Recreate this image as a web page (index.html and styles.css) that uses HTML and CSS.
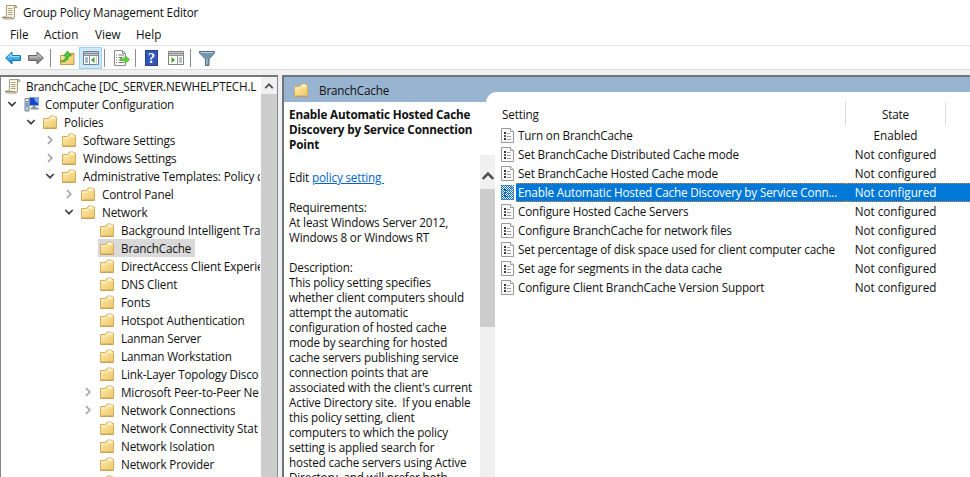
FILE: index.html
```html
<!DOCTYPE html>
<html lang="en">
<head>
<meta charset="utf-8">
<title>Group Policy Management Editor</title>
<link rel="stylesheet" href="styles.css">
</head>
<body>
<svg class="defs" width="0" height="0">
  <defs>
    <linearGradient id="gold" x1="0" y1="0" x2="1" y2="1"><stop offset="0" stop-color="#fdebb0"/><stop offset="1" stop-color="#edc767"/></linearGradient>
    <linearGradient id="blue" x1="0" y1="0" x2="0" y2="1"><stop offset="0" stop-color="#7cd0f6"/><stop offset="1" stop-color="#1287d0"/></linearGradient>
    <linearGradient id="gray" x1="0" y1="0" x2="0" y2="1"><stop offset="0" stop-color="#b5b5b5"/><stop offset="1" stop-color="#777"/></linearGradient>
    <pattern id="dither" width="2" height="2" patternUnits="userSpaceOnUse"><rect width="1" height="1" fill="#0078d7"/><rect x="1" y="1" width="1" height="1" fill="#0078d7"/></pattern>
  </defs>
  <symbol id="folder" viewBox="0 0 14 14">
    <path d="M.5 3.500H5l1.500-1 .8-1.500h4.200l1 1.200h1v11H.5z" fill="url(#gold)" stroke="#d5ad5c"/>
    <path d="M8 2.200h3.500" stroke="#fffbe8" stroke-width="1.400"/>
    <path d="M1 5.200h5l1.800-1.600H13" fill="none" stroke="#fff3c8"/>
    <path d="M.5 13.300h13" stroke="#bf9850"/>
  </symbol>
  <symbol id="scroll" viewBox="0 0 16 16">
    <path d="M4.500 1.500h9q1.500.2 1.500 2h-2.500v9.500q0 2-2 2h-8q-2 0-2-2h3q.8 0 .8-1z" fill="#f7f3dc" stroke="#a49c80"/>
    <path d="M12.500 3.500q0-2 1.300-2" fill="none" stroke="#8f8768"/>
    <path d="M6 4.500h4.500M6 6.500h4.500M6 8.500h4.500M6 10.500h4.500" stroke="#a9a48f"/>
    <path d="M1 13.500h8.500q.3 1.200 1.500 1.200" fill="none" stroke="#8f8768"/>
  </symbol>
  <symbol id="computer" viewBox="0 0 16 16">
    <path d="M5.500 1.500h9v8h-9z" fill="#1a45d0" stroke="#8fa3b8"/>
    <path d="M10 2h4v5q-3-1-4-5z" fill="#69a9f5"/>
    <path d="M8.500 10h3v2h-3z" fill="#8894a0"/><path d="M6.500 12.500h8" stroke="#8492a0" stroke-width="2"/>
    <path d="M1 5.500h4V15H1z" fill="#b9cbd9" stroke="#6f8799"/><path d="M2 8h2M2 10h2" stroke="#4f6d82"/>
    <path d="M1 4.500q0-2 2-2t2 2" fill="none" stroke="#5d7484" stroke-width="1.200"/>
  </symbol>
  <symbol id="down" viewBox="0 0 10 10"><path d="M1.300 3l3.700 3.700L8.700 3" fill="none" stroke="#404040" stroke-width="1.700"/></symbol>
  <symbol id="right" viewBox="0 0 10 10"><path d="M3 1.200l3.800 3.800L3 8.800" fill="none" stroke="#a6a6a6" stroke-width="1.700"/></symbol>
  <symbol id="up" viewBox="0 0 12 12"><path d="M1.500 8.500L6 4l4.500 4.500" fill="none" stroke="#505050" stroke-width="2.200"/></symbol>
  <symbol id="setting" viewBox="0 0 13 15">
    <path d="M.5.5h9l3 3v11H.5z" fill="#fcfcfc" stroke="#999"/><path d="M9.500.5v3h3" fill="#fff" stroke="#999"/>
    <path d="M3 4h2v2H3zM3 10h2v2H3z" fill="#333"/><path d="M3 7h2v2H3z" fill="#555"/>
    <path d="M6 5.500h3M6 8.500h4M6 11.500h4" stroke="#999"/>
  </symbol>
</svg>

<div class="window">
  <header class="titlebar"><svg class="i16"><use href="#scroll"/></svg><span>Group Policy Management Editor</span></header>
  <nav class="menu"><span class="m1">File</span><span class="m2">Action</span><span class="m3">View</span><span class="m4">Help</span></nav>
  <div class="toolbar">
    <svg class="tool" viewBox="0 0 18 18"><path d="M1.500 9L8 3v3.500h8.500v5H8V15z" fill="url(#blue)" stroke="#1579b7"/><path d="M4 8.500L7.300 5.600v2H15" fill="none" stroke="#a6e2fb"/></svg>
    <svg class="tool" viewBox="0 0 18 18"><path d="M16.500 9L10 3v3.500H1.500v5H10V15z" fill="url(#gray)" stroke="#656565"/><path d="M3 8h8V5.600L14 8.500" fill="none" stroke="#c9c9c9"/></svg>
    <i class="sep"></i>
    <svg class="tool folder-up" viewBox="0 0 18 18"><path d="M2.500 6.500h6l2-2h5.500v11H2.500z" fill="url(#gold)" stroke="#c99b48"/><path d="M12 5h4" stroke="#b8873c"/><path d="M3 12q4 0 5-5H5.500L9.500 2l4 5H11Q10 13 3 13z" fill="#52c536" stroke="#309924" stroke-width=".7"/></svg>
    <span class="tool-on"><svg class="tool" viewBox="0 0 18 18"><path d="M1.500 2.500h15v13h-15z" fill="#fff" stroke="#73808a"/><path d="M2 4.500h14" stroke="#82909b" stroke-width="2"/><path d="M1 6.500h16M7.500 7v9" stroke="#87929a"/><path d="M3 9h3M3 11h3M3 13h3" stroke="#4376ad"/><path d="M9 11l3.500-3v6z" fill="#36a51f"/><path d="M14.500 7v8.500" stroke="#cbd2d8"/></svg></span>
    <i class="sep"></i>
    <svg class="tool export" viewBox="0 0 18 18"><path d="M2.500 1.500h8l3 3v12h-11z" fill="#fff" stroke="#8d8d8d"/><path d="M10.500 1.500v3h3" fill="none" stroke="#8d8d8d"/><path d="M4 6h1m1.500 0H12M4 8.500h1m1.500 0H10M4 11h1m1.500 0H9M4 13.500h1m1.500 0H12" stroke="#7b7b7b"/><path d="M8.500 9.300H13V6.500l4.500 4-4.500 4v-2.800H8.500z" fill="#62cf40" stroke="#45a82c" stroke-width=".7"/></svg>
    <i class="sep"></i>
    <span class="tool help">?</span>
    <svg class="tool panes" viewBox="0 0 18 18"><path d="M1.500 2.500h15v13h-15z" fill="#fff" stroke="#828282"/><path d="M2 4.500h14" stroke="#909090" stroke-width="2"/><path d="M1 6.500h16M10.500 7v9" stroke="#909090"/><path d="M12 9h3M12 11h3M12 13h3" stroke="#6f8297"/><path d="M8 11L4.500 8v6z" fill="#36a51f"/></svg>
    <i class="sep"></i>
    <svg class="tool filter" viewBox="0 0 18 18"><path d="M1.500 2.500h15v1.500L11 10v6.500H7.500V10l-6-6z" fill="#7797ae" stroke="#4f6c82"/><path d="M2.500 3.500h13" stroke="#b7cddd"/><path d="M8.800 10v5.500" stroke="#bdd3e1"/></svg>
  </div>

  <main class="body">
    <section class="tree">
      <div class="nodes">
        <div class="node root"><svg class="i16"><use href="#scroll"/></svg><span>BranchCache [DC_SERVER.NEWHELPTECH.L</span></div>
        <div class="node l1"><svg class="ch"><use href="#down"/></svg><svg class="i16"><use href="#computer"/></svg><span>Computer Configuration</span></div>
        <div class="node l2"><svg class="ch"><use href="#down"/></svg><svg class="fo"><use href="#folder"/></svg><span>Policies</span></div>
        <div class="node l3"><svg class="ch"><use href="#right"/></svg><svg class="fo"><use href="#folder"/></svg><span>Software Settings</span></div>
        <div class="node l3"><svg class="ch"><use href="#right"/></svg><svg class="fo"><use href="#folder"/></svg><span>Windows Settings</span></div>
        <div class="node l3"><svg class="ch"><use href="#down"/></svg><svg class="fo"><use href="#folder"/></svg><span>Administrative Templates: Policy d</span></div>
        <div class="node l4"><svg class="ch"><use href="#right"/></svg><svg class="fo"><use href="#folder"/></svg><span>Control Panel</span></div>
        <div class="node l4"><svg class="ch"><use href="#down"/></svg><svg class="fo"><use href="#folder"/></svg><span>Network</span></div>
        <div class="node l5"><svg class="fo"><use href="#folder"/></svg><span>Background Intelligent Tra</span></div>
        <div class="node l5 current"><svg class="fo"><use href="#folder"/></svg><span>BranchCache</span></div>
        <div class="node l5"><svg class="fo"><use href="#folder"/></svg><span>DirectAccess Client Experie</span></div>
        <div class="node l5"><svg class="fo"><use href="#folder"/></svg><span>DNS Client</span></div>
        <div class="node l5"><svg class="fo"><use href="#folder"/></svg><span>Fonts</span></div>
        <div class="node l5"><svg class="fo"><use href="#folder"/></svg><span>Hotspot Authentication</span></div>
        <div class="node l5"><svg class="fo"><use href="#folder"/></svg><span>Lanman Server</span></div>
        <div class="node l5"><svg class="fo"><use href="#folder"/></svg><span>Lanman Workstation</span></div>
        <div class="node l5"><svg class="fo"><use href="#folder"/></svg><span>Link-Layer Topology Disco</span></div>
        <div class="node l5 parent"><svg class="ch"><use href="#right"/></svg><svg class="fo"><use href="#folder"/></svg><span>Microsoft Peer-to-Peer Ne</span></div>
        <div class="node l5 parent"><svg class="ch"><use href="#right"/></svg><svg class="fo"><use href="#folder"/></svg><span>Network Connections</span></div>
        <div class="node l5"><svg class="fo"><use href="#folder"/></svg><span>Network Connectivity Stat</span></div>
        <div class="node l5"><svg class="fo"><use href="#folder"/></svg><span>Network Isolation</span></div>
        <div class="node l5"><svg class="fo"><use href="#folder"/></svg><span>Network Provider</span></div>
        <div class="node l5"><svg class="fo"><use href="#folder"/></svg></div>
      </div>
      <div class="bar"><div class="btn"><svg class="ch"><use href="#up"/></svg></div><div class="thumb"></div></div>
    </section>

    <section class="detail">
      <div class="head"><svg class="fo"><use href="#folder"/></svg><span>BranchCache</span></div>
      <div class="split">
        <article class="info">
          <h1>Enable Automatic Hosted Cache<br>Discovery by Service Connection<br>Point</h1>
          <p>Edit <a>policy setting&nbsp;</a></p>
          <p>Requirements:<br>At least Windows Server 2012,<br>Windows 8 or Windows RT</p>
          <p>Description:<br>This policy setting specifies<br>whether client computers should<br>attempt the automatic<br>configuration of hosted cache<br>mode by searching for hosted<br>cache servers publishing service<br>connection points that are<br>associated with the client's current<br>Active Directory site.&nbsp; If you enable<br>this policy setting, client<br>computers to which the policy<br>setting is applied search for<br>hosted cache servers using Active<br>Directory, and will prefer both</p>
        </article>
        <div class="bar info-bar"><div class="btn"><svg class="up"><use href="#up"/></svg></div><div class="thumb"></div></div>
        <div class="list">
          <div class="cols"><span class="name">Setting</span><span class="state">State</span></div>
          <div class="row"><svg class="st"><use href="#setting"/></svg><span class="name">Turn on BranchCache</span><span class="state">Enabled</span></div>
          <div class="row"><svg class="st"><use href="#setting"/></svg><span class="name">Set BranchCache Distributed Cache mode</span><span class="state">Not configured</span></div>
          <div class="row"><svg class="st"><use href="#setting"/></svg><span class="name">Set BranchCache Hosted Cache mode</span><span class="state">Not configured</span></div>
          <div class="row selected"><svg class="st"><use href="#setting"/><rect width="13" height="15" fill="url(#dither)"/></svg><span class="name">Enable Automatic Hosted Cache Discovery by Service Conn...</span><span class="state">Not configured</span></div>
          <div class="row"><svg class="st"><use href="#setting"/></svg><span class="name">Configure Hosted Cache Servers</span><span class="state">Not configured</span></div>
          <div class="row"><svg class="st"><use href="#setting"/></svg><span class="name">Configure BranchCache for network files</span><span class="state">Not configured</span></div>
          <div class="row"><svg class="st"><use href="#setting"/></svg><span class="name">Set percentage of disk space used for client computer cache</span><span class="state">Not configured</span></div>
          <div class="row"><svg class="st"><use href="#setting"/></svg><span class="name">Set age for segments in the data cache</span><span class="state">Not configured</span></div>
          <div class="row"><svg class="st"><use href="#setting"/></svg><span class="name">Configure Client BranchCache Version Support</span><span class="state">Not configured</span></div>
        </div>
      </div>
    </section>
  </main>
</div>
</body>
</html>
```
FILE: styles.css
```css
* { box-sizing: border-box; }
body { margin: 0; background: #fff; color: #101010; font: 11.7px/18px "Open Sans", "Noto Sans", sans-serif; letter-spacing: -.16px; overflow: hidden; }
svg { flex: none; display: block; }
.defs { position: absolute; }
.window { width: 970px; height: 477px; display: flex; flex-direction: column; overflow: hidden; }

.titlebar { height: 24px; display: flex; align-items: center; padding-left: 2px; gap: 5px; }
.i16 { width: 16px; height: 16px; }
.menu { height: 22px; display: flex; align-items: center; padding: 0 0 2px 10px; border-bottom: 1px solid #e3e3e3; letter-spacing: 0; }
.m1 { width: 34px; }
.m2 { width: 51px; }
.m3 { width: 41px; }

.toolbar { height: 23px; display: flex; align-items: center; padding: 1px 0 0 4px; }
.tool { width: 18px; height: 18px; margin-right: 5px; }
.sep { width: 1px; height: 18px; background: #8c8c8c; margin: 0 7px 0 0; }
.tool-on { width: 23px; height: 22px; background: #cce8ff; border: 1px solid #99d1ff; display: flex; align-items: center; padding-left: 2px; margin-right: 2px; }
.tool-on .tool { margin: 0; }
.folder-up { margin-right: 3px; }
.export { margin-right: 5px; }
.help { width: 13px; height: 16px; margin: 0 9px 0 2px; background: #3156b4; border: 1px solid #243f8c; color: #fff; font: bold 14px/15px "Liberation Serif", serif; text-align: center; }
.filter { margin: 0; }

.body { flex: 1; min-height: 0; display: flex; gap: 4px; background: #f0f0f0; border-top: 1px solid #dcdcdc; padding-top: 5px; }
.tree { width: 278px; display: flex; background: #fff; border: 1px solid #828790; border-width: 2px 1px 0 1px; border-top-color: #777; overflow: hidden; }
.nodes { width: 259px; overflow: hidden; }
.node { height: 18px; display: flex; align-items: center; white-space: nowrap; }
.fo { width: 14px; height: 14px; }
.ch { width: 10px; height: 10px; }
.node span { margin-left: 7px; }
.node .i16 + span { margin-left: 5px; }
.node > .ch { margin-right: 7px; }
.root { padding-left: 4px; }
.l1 { padding-left: 6px; }
.l2 { padding-left: 25px; }
.l3 { padding-left: 44px; }
.l4 { padding-left: 63px; }
.l5 { padding-left: 99px; }
.l5.parent { padding-left: 82px; }
.current { width: 97px; margin-left: 97px; padding-left: 2px; background: #d9d9d9; }
.bar { width: 16px; margin-left: 1px; background: #f0f0f0; display: flex; flex-direction: column; }
.btn { height: 17px; display: flex; align-items: center; justify-content: center; }
.bar .thumb { flex: 1; background: #cdcdcd; }

.detail { flex: 1; min-width: 0; display: flex; flex-direction: column; background: #fff; border: solid #70757c; border-width: 2px 0 0 2px; }
.head { height: 25px; flex: none; display: flex; align-items: center; gap: 11px; padding-left: 10px; background: #99b4d1; }
.split { flex: 1; min-height: 0; display: flex; align-items: flex-start; }
.info { width: 196px; height: 375px; padding: 5px 0 0 5px; line-height: 15px; white-space: nowrap; overflow: hidden; }
.info h1 { margin: 0 0 18px; font-size: 11.7px; line-height: 15px; font-weight: 700; }
.info p { margin: 0 0 15px; }
.info a { color: #0066cc; text-decoration: underline; }
.info-bar { width: 15px; height: 375px; margin: 53px 0 0 0; }
.info-bar .btn { height: 34px; align-items: flex-end; padding-bottom: 6px; }
.up { width: 14px; height: 14px; }
.info-bar .thumb { flex: none; height: 138px; }
.list { flex: 1; height: 385px; margin: -10px 0 0 -9px; background: #fff; border-radius: 11px 0 0 0; clip-path: polygon(0 0, 100% 0, 100% 100%, 10px 100%, 10px 10px, 0 10px); }
.cols { height: 34px; display: flex; padding: 10px 0 0 16px; }
.cols .name { width: 344px; border-right: 1px solid #ddd; line-height: 24px; }
.cols .state { width: 100px; border-right: 1px solid #ddd; line-height: 24px; text-align: center; }
.row { height: 19px; display: flex; align-items: center; padding-left: 15px; white-space: nowrap; }
.st { width: 13px; height: 15px; margin-right: 2px; }
.row .name { width: 330px; height: 19px; line-height: 19px; padding-left: 2px; }
.row .state { flex: 1; height: 19px; line-height: 19px; padding-right: 25px; text-align: center; letter-spacing: 0; }
.row.selected .name, .row.selected .state { background: #0078d7; color: #fff; border: dotted #d8823a; border-width: 1px 0; line-height: 17px; }
```
